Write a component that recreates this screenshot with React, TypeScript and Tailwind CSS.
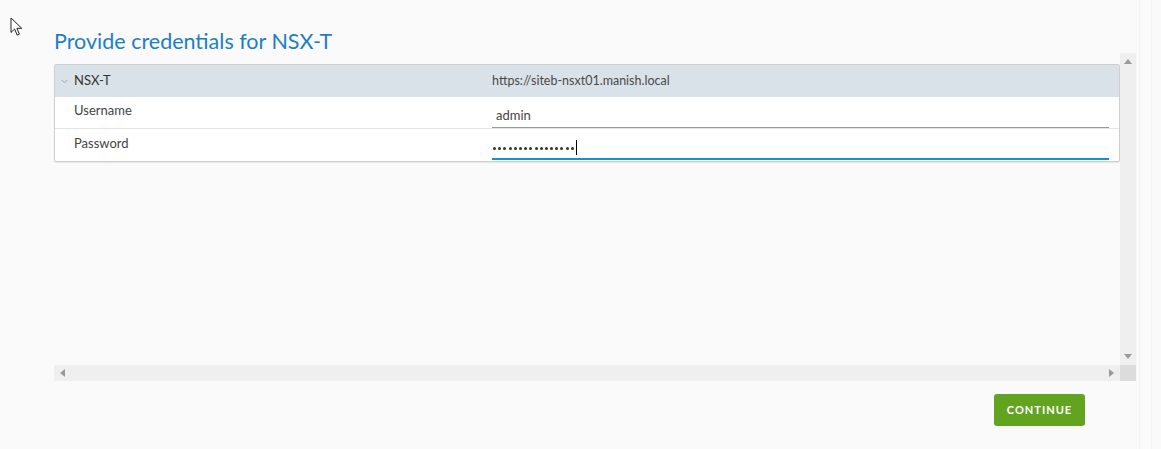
import React from "react";

const FONT = { fontFamily: "Lato, 'Open Sans', sans-serif" };

function Cursor() {
  return (
    <svg className="absolute left-[10px] top-[17px]" width="14" height="20" viewBox="0 0 14 20">
      <path
        d="M1 1 L1 15.5 L4.6 12 L7.2 18.2 L9.4 17.2 L6.9 11.3 L11.8 11.3 Z"
        fill="#fff"
        stroke="#222"
        strokeWidth="1"
        strokeLinejoin="miter"
      />
    </svg>
  );
}

export default function App() {
  return (
    <div className="relative h-[449px] w-[1161px] overflow-hidden bg-[#fafafa]" style={FONT}>
      <Cursor />
      {/* faint right edge lines */}
      <div className="absolute right-[21px] top-0 h-full w-px bg-[#f3f3f3]" />
      <div className="absolute right-[9px] top-0 h-full w-px bg-[#f3f3f3]" />

      <div className="pl-[54px] pt-[29px]">
        <h2 className="text-[21.5px] leading-[24px] font-normal text-[#1c7fc3]">
          Provide credentials for NSX-T
        </h2>

        {/* scroll region */}
        <div className="grid h-[328px] w-[1082px] grid-cols-[1fr_16px] grid-rows-[1fr_16px]">
          <div className="pt-[11px]">
            <div className="w-[1066px] rounded-[2px] border border-[#cfcfcf] bg-white text-[13px] shadow-[0_1px_1px_rgba(0,0,0,0.08)]">
              <div className="flex h-[32px] items-center bg-[#d9e2e9] text-[#333]">
                <div className="flex w-[437px] items-center">
                  <svg className="ml-[6px] mr-[6px]" width="7" height="5" viewBox="0 0 7 5">
                    <path d="M0.5 0.8 L3.5 3.8 L6.5 0.8" fill="none" stroke="#9aa3aa" strokeWidth="1" />
                  </svg>
                  <span>NSX-T</span>
                </div>
                <span className="text-[12.5px] text-[#4a4a4a]">https://siteb-nsxt01.manish.local</span>
              </div>

              <div className="flex h-[32px] border-b border-[#e6e6e6]">
                <div className="w-[437px] pl-[19px] pt-[4px] text-[#444]">Username</div>
                <div className="w-[617px] pt-[9px]">
                  <div className="h-[22px] border-b border-[#9a9a9a] pl-[4px] text-[#444]">admin</div>
                </div>
              </div>

              <div className="flex h-[32px]">
                <div className="w-[437px] pl-[19px] pt-[5px] text-[#444]">Password</div>
                <div className="w-[617px] pt-[7px]">
                  <div className="flex h-[24px] items-center border-b-2 border-[#0a95d6] pl-[1px] text-[#222]">
                    <span className="mt-[3px] flex gap-[2.2px]">
                      {Array.from({ length: 16 }).map((_, i) => (
                        <span key={i} className="inline-block h-[3px] w-[3px] rounded-full bg-[#333]" />
                      ))}
                    </span>
                    <span className="ml-[2px] inline-block h-[15px] w-px bg-black" />
                  </div>
                </div>
              </div>
            </div>
          </div>

          {/* vertical scrollbar */}
          <div className="flex flex-col items-center justify-between bg-[#efefef] py-[6px]">
            <svg width="8" height="5" viewBox="0 0 8 5">
              <path d="M0 5 L4 0 L8 5 Z" fill="#9a9a9a" />
            </svg>
            <svg width="8" height="5" viewBox="0 0 8 5">
              <path d="M0 0 L4 5 L8 0 Z" fill="#9a9a9a" />
            </svg>
          </div>

          {/* horizontal scrollbar */}
          <div className="flex items-center justify-between bg-[#efefef] px-[6px]">
            <svg width="5" height="8" viewBox="0 0 5 8">
              <path d="M5 0 L0 4 L5 8 Z" fill="#9a9a9a" />
            </svg>
            <svg width="5" height="8" viewBox="0 0 5 8">
              <path d="M0 0 L5 4 L0 8 Z" fill="#9a9a9a" />
            </svg>
          </div>
          <div className="bg-[#dcdcdc]" />
        </div>
      </div>

      <div className="flex justify-end pr-[76px] pt-[13px]">
        <button className="h-[32px] w-[91px] rounded-[3px] bg-[#62a420] text-[11px] font-bold tracking-[1px] text-white">
          CONTINUE
        </button>
      </div>
    </div>
  );
}
